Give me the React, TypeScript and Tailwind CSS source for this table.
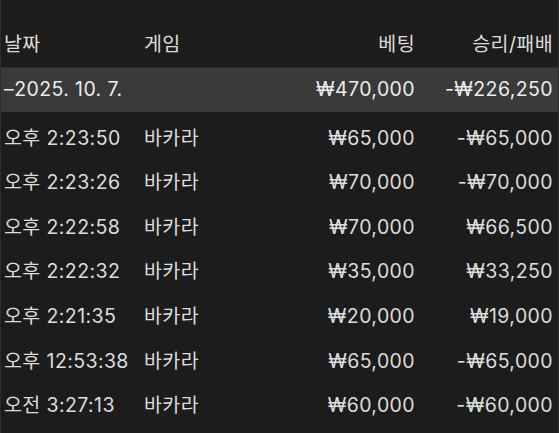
const rows = [
  { date: "오후 2:23:50", game: "바카라", bet: "₩65,000", result: "-₩65,000" },
  { date: "오후 2:23:26", game: "바카라", bet: "₩70,000", result: "-₩70,000" },
  { date: "오후 2:22:58", game: "바카라", bet: "₩70,000", result: "₩66,500" },
  { date: "오후 2:22:32", game: "바카라", bet: "₩35,000", result: "₩33,250" },
  { date: "오후 2:21:35", game: "바카라", bet: "₩20,000", result: "₩19,000" },
  { date: "오후 12:53:38", game: "바카라", bet: "₩65,000", result: "-₩65,000" },
  { date: "오전 3:27:13", game: "바카라", bet: "₩60,000", result: "-₩60,000" },
];

const cols = "grid grid-cols-[140px_1fr_138px_138px] items-center pl-[3px] pr-[5px]";

export default function App() {
  return (
    <div
      className="w-[559px] h-[433px] bg-[#1c1c1c] border-l border-r border-[#2c2c2c] overflow-hidden text-[19.5px] tracking-[0.4px] text-[#dcdcdc]"
      style={{ fontFamily: 'Inter, "Noto Sans CJK KR", sans-serif' }}
    >
      {/* header */}
      <div className="pt-[22px] border-b border-[#2a2a2a]">
        <div className={`${cols} h-[45px]`}>
          <span>날짜</span>
          <span>게임</span>
          <span className="text-right">베팅</span>
          <span className="text-right">승리/패배</span>
        </div>
      </div>

      {/* day summary */}
      <div className={`${cols} h-[44px] bg-[#3a3a3a] text-[#ececec]`}>
        <span className="col-span-2 whitespace-nowrap">–2025. 10. 7.</span>
        <span className="text-right">₩470,000</span>
        <span className="text-right">-₩226,250</span>
      </div>

      <div className="pt-[4px]">
        {rows.map((r, i) => (
          <div key={i} className={`${cols} h-[44.6px]`}>
            <span className="whitespace-nowrap">{r.date}</span>
            <span>{r.game}</span>
            <span className="text-right">{r.bet}</span>
            <span className="text-right">{r.result}</span>
          </div>
        ))}
      </div>
    </div>
  );
}
